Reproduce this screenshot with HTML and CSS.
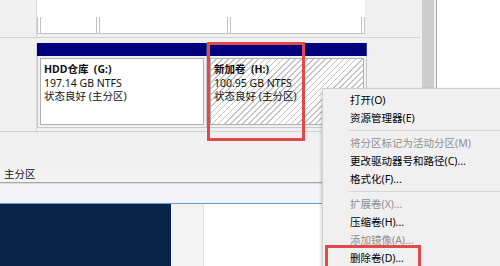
FILE: index.html
```html
<!DOCTYPE html>
<html lang="zh-CN">
<head>
<meta charset="utf-8">
<title>磁盘管理</title>
<link rel="stylesheet" href="styles.css">
</head>
<body>
<div class="screen">
  <div class="top">
    <div class="view">
      <div class="row prev">
        <div class="label"></div>
        <div class="prev-parts">
          <div class="pp p1"><div class="pp-foot"></div></div>
          <div class="pp p2"><div class="pp-foot"></div></div>
          <div class="pp p3"><div class="pp-foot last"></div></div>
        </div>
      </div>
      <div class="row disk">
        <div class="label"></div>
        <div class="vols">
          <div class="vol v1">
            <div class="bar"></div>
            <div class="box">
              <div class="inner">
                <div class="name">HDD仓库&nbsp;&nbsp;(G:)</div>
                <div>197.14 GB NTFS</div>
                <div>状态良好 (主分区)</div>
              </div>
            </div>
          </div>
          <div class="vol v2">
            <div class="bar"></div>
            <div class="box">
              <div class="inner hatch">
                <div class="name">新加卷&nbsp;&nbsp;(H:)</div>
                <div>100.95 GB NTFS</div>
                <div>状态良好 (主分区)</div>
              </div>
            </div>
          </div>
        </div>
      </div>
    </div>
    <div class="scroll"><div class="thumb"></div></div>
    <div class="pane"></div>
  </div>
  <div class="legend"><span>主分区</span></div>
  <div class="status"></div>
  <div class="desk">
    <div class="navy"></div>
    <div class="gap"></div>
    <div class="win"></div>
  </div>

  <div class="hl hl-vol"></div>

  <div class="menu">
    <div class="item">打开(O)</div>
    <div class="item">资源管理器(E)</div>
    <div class="sep"></div>
    <div class="item off">将分区标记为活动分区(M)</div>
    <div class="item">更改驱动器号和路径(C)...</div>
    <div class="item">格式化(F)...</div>
    <div class="sep"></div>
    <div class="item off">扩展卷(X)...</div>
    <div class="item">压缩卷(H)...</div>
    <div class="item off">添加镜像(A)...</div>
    <div class="item">删除卷(D)...</div>
  </div>

  <div class="hl hl-item"></div>
</div>
</body>
</html>
```

FILE: styles.css
```css
* { box-sizing: border-box; }
html, body { margin: 0; padding: 0; }
body {
  width: 500px;
  height: 266px;
  overflow: hidden;
  background: #f0f0f0;
  font-family: "Noto Sans", "Noto Sans CJK SC", sans-serif;
  font-size: 10.5px;
  color: #111;
}
.screen {
  position: relative;
  width: 500px;
  height: 266px;
  overflow: hidden;
  display: flex;
  flex-direction: column;
}

/* top area: graphical view + scrollbar + side pane */
.top {
  display: flex;
  height: 166px;
  flex: none;
}
.view {
  width: 420px;
  background: #f0f0f0;
}
.scroll {
  width: 17px;
  background: #f0f0f0;
  padding: 0 2px;
  border-right: 1px solid #a8a8a8;
}
.thumb {
  height: 100%;
  background: #cdcdcd;
}
.pane {
  flex: 1;
  background: #fff;
}

.row {
  display: flex;
  border-bottom: 1px solid #d2d2d2;
}
.label {
  width: 37px;
  border-right: 1px solid #d6d6d6;
  background: #f0f0f0;
}
.prev { height: 38px; }
.prev-parts {
  display: flex;
  height: 34px;
  background: #fff;
  border-bottom: 1px solid #c4c4c4;
}
.pp { display: flex; flex-direction: column; }
.p1 { width: 59px; }
.p2 { width: 131px; }
.p3 { width: 138px; }
.pp-foot {
  margin-top: 17px;
  flex: 1;
  border-left: 4px double #c2c2c2;
}
.pp-foot.last { border-right: 4px double #c2c2c2; }

.disk {
  height: 94px;
  padding-top: 5px;
}
.vols { display: flex; }
.vol { display: flex; flex-direction: column; }
.v1 { width: 170px; }
.v2 { width: 160px; }
.bar {
  height: 13px;
  background: #00007e;
  border-right: 1px solid #3a3a8a;
}
.box {
  border: 1px solid #c9c9c9;
  border-top: 0;
  padding: 2px;
}
.inner {
  height: 67px;
  border: 1px solid #b0b0b0;
  background: #fff;
  padding: 4px 0 0 3px;
  line-height: 13.5px;
  white-space: nowrap;
}
.name { font-weight: bold; }
.hatch {
  background: repeating-linear-gradient(135deg, #ffffff 0 3.1px, #c4c4c4 3.1px 4.3px);
}

/* legend + status */
.legend {
  height: 17px;
  flex: none;
  background: #f2f2f2;
  border-bottom: 1px solid #a9a9a9;
  padding-left: 4px;
  line-height: 16px;
}
.status {
  height: 20px;
  flex: none;
  background: #f4f4f6;
  border-top: 1px solid #dcdcdc;
}
.desk {
  flex: 1;
  display: flex;
  border-top: 1px solid #5b9bd0;
}
.navy { width: 171px; background: #082549; }
.gap { width: 33px; background: #f3f3f3; border-right: 1px solid #e2e2e2; }
.win { flex: 1; background: #fff; }

/* context menu */
.menu {
  position: absolute;
  left: 322px;
  top: 88px;
  width: 190px;
  height: 190px;
  background: #f0f0f0;
  border: 1px solid #cfcfcf;
  box-shadow: -1px 1px 3px rgba(0, 0, 0, 0.18);
  padding-top: 2px;
}
.item {
  height: 18px;
  line-height: 18px;
  padding-left: 27px;
  color: #000;
  white-space: nowrap;
}
.item.off { color: #8e8e8e; }
.sep {
  height: 7px;
  margin-left: 26px;
  position: relative;
}
.sep::before {
  content: "";
  position: absolute;
  left: 0;
  right: 0;
  top: 3px;
  border-top: 1px solid #d7d7d7;
}

/* red highlight boxes */
.hl {
  position: absolute;
  border: 3px solid #e04a48;
}
.hl-vol { left: 207px; top: 42px; width: 98px; height: 99px; }
.hl-item { left: 325px; top: 245px; width: 96px; height: 40px; }
```
